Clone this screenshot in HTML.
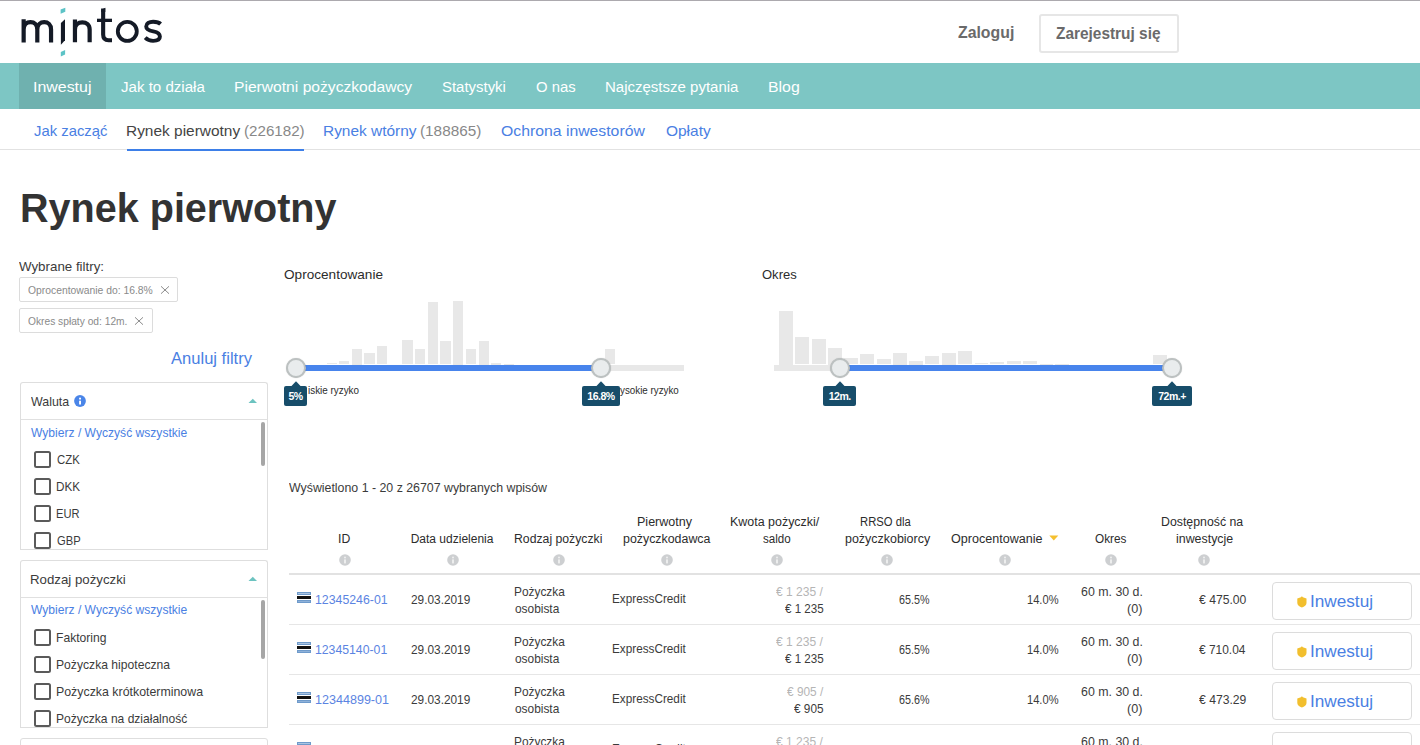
<!DOCTYPE html><html><head><meta charset="utf-8"><title>Rynek pierwotny</title><style>
html,body{margin:0;padding:0;background:#fff;}body{width:1420px;height:745px;overflow:hidden;position:relative;font-family:"Liberation Sans",sans-serif;}
.t{position:absolute;white-space:pre;line-height:1;transform-origin:0 0;}
</style></head><body>
<div style="position:absolute;left:0px;top:0px;width:1420px;height:1px;background:#aca9ae"></div>
<svg style="position:absolute;left:0;top:0" width="180" height="62" viewBox="0 0 180 62">
<g fill="none" stroke="#141a26" stroke-width="4.2">
<path d="M23.65,19.3 V42.5 M23.65,29.5 C23.65,24.6 26.7,22.2 30.5,22.2 C34.3,22.2 37.3,24.6 37.3,29.5 V42.5 M37.3,29.5 C37.3,24.6 40.4,22.2 44.2,22.2 C48,22.2 51.05,24.6 51.05,29.5 V42.5"/>
<path d="M74.95,19.4 V42.3 M74.95,29.5 C74.95,24.6 78.3,22.3 82.3,22.3 C86.3,22.3 89.65,24.6 89.65,29.5 V42.3"/>
<circle cx="127.3" cy="31.35" r="9.5" stroke-width="3.8"/>
<path d="M160.6,24 C158.8,22.2 156.2,21.8 153.1,21.8 C149.2,21.8 146.2,23.5 146.2,26.4 C146.2,29.7 149.6,30.6 153.3,31.3 C157.4,32.1 159.9,33.4 159.9,36.6 C159.9,39.4 157.3,40.9 153.1,40.9 C149.8,40.9 147.3,39.8 145.2,37.7" stroke-width="3.9"/>
<path d="M103.15,8.5 V34.5 C103.15,38.6 105.2,40.3 108.6,40.3 H112" stroke-width="4.1"/>
<path d="M97,20.35 H112" stroke-width="3.3"/>
</g>
<polygon fill="#141a26" points="60.9,23 65,19.3 65,40.3 60.9,44.7"/>
<polygon fill="#141a26" points="101.25,9.8 105.35,7.7 105.35,12 101.25,12"/>
<polygon fill="#5cc3c6" points="60.6,9.6 65.3,7.7 65.3,11.8 60.6,13.7"/>
<polygon fill="#5cc3c6" points="60.8,51.9 65.1,50 65.1,54.5 60.8,56.4"/>
</svg>
<div style="position:absolute;left:1038.5px;top:13.5px;width:136px;height:35px;border:2px solid #e6e6e6;border-radius:3px"></div>
<div style="position:absolute;left:0px;top:63px;width:1420px;height:46px;background:#7dc6c4"></div>
<div style="position:absolute;left:19px;top:63px;width:87px;height:46px;background:#6fb1af"></div>
<div style="position:absolute;left:0px;top:149px;width:1420px;height:1px;background:#e2e2e2"></div>
<div style="position:absolute;left:127px;top:149px;width:177px;height:2px;background:#3d7fe8"></div>
<div style="position:absolute;left:19px;top:277px;width:157px;height:23px;border:1px solid #dcdcdc;border-radius:2px"></div>
<div style="position:absolute;left:19px;top:308px;width:132px;height:23px;border:1px solid #dcdcdc;border-radius:2px"></div>
<svg style="position:absolute;left:160px;top:284.5px" width="10" height="10"><path d="M1,1.3 L9,8.7 M9,1.3 L1,8.7" stroke="#8c8c8c" stroke-width="1"/></svg>
<svg style="position:absolute;left:134px;top:315.5px" width="10" height="10"><path d="M1,1.3 L9,8.7 M9,1.3 L1,8.7" stroke="#8c8c8c" stroke-width="1"/></svg>
<div style="position:absolute;left:20px;top:382px;width:246px;height:36px;border:1px solid #dedede;border-radius:3px 3px 0 0;border-bottom:1px solid #e0e0e0"></div>
<div style="position:absolute;left:20px;top:420px;width:246px;height:129px;border:1px solid #dedede;border-top:0"></div>
<svg style="position:absolute;left:248px;top:397.5px" width="10" height="6"><path d="M0.5,5 L4.8,0.8 L9,5 Z" fill="#6cc3c0"/></svg>
<div style="position:absolute;left:261px;top:422px;width:4.3px;height:43.6px;background:#a6a6a6;border-radius:2px"></div>
<div style="position:absolute;left:20px;top:560px;width:246px;height:36px;border:1px solid #dedede;border-radius:3px 3px 0 0;border-bottom:1px solid #e0e0e0"></div>
<div style="position:absolute;left:20px;top:598px;width:246px;height:128.5px;border:1px solid #dedede;border-top:0"></div>
<svg style="position:absolute;left:248px;top:575.5px" width="10" height="6"><path d="M0.5,5 L4.8,0.8 L9,5 Z" fill="#6cc3c0"/></svg>
<div style="position:absolute;left:261px;top:599.7px;width:4.3px;height:59.7px;background:#a6a6a6;border-radius:2px"></div>
<div style="position:absolute;left:20px;top:738px;width:246px;height:20px;border:1px solid #dedede;border-radius:3px 3px 0 0"></div>
<svg style="position:absolute;left:73.9px;top:395.4px" width="12" height="12"><circle cx="6" cy="6" r="5.9" fill="#4a85e8"/><rect x="5.1" y="2.7" width="1.9" height="1.8" fill="#fff"/><rect x="5.1" y="5.7" width="1.9" height="3.8" fill="#fff"/></svg>
<div style="position:absolute;left:33.5px;top:450.6px;width:13.2px;height:13.2px;border:2px solid #5a5a5a;border-radius:2.5px"></div>
<div style="position:absolute;left:33.5px;top:477.6px;width:13.2px;height:13.2px;border:2px solid #5a5a5a;border-radius:2.5px"></div>
<div style="position:absolute;left:33.5px;top:504.6px;width:13.2px;height:13.2px;border:2px solid #5a5a5a;border-radius:2.5px"></div>
<div style="position:absolute;left:33.5px;top:531.6px;width:13.2px;height:13.2px;border:2px solid #5a5a5a;border-radius:2.5px"></div>
<div style="position:absolute;left:33.5px;top:628.5px;width:13.2px;height:13.2px;border:2px solid #5a5a5a;border-radius:2.5px"></div>
<div style="position:absolute;left:33.5px;top:655.5px;width:13.2px;height:13.2px;border:2px solid #5a5a5a;border-radius:2.5px"></div>
<div style="position:absolute;left:33.5px;top:682.5px;width:13.2px;height:13.2px;border:2px solid #5a5a5a;border-radius:2.5px"></div>
<div style="position:absolute;left:33.5px;top:709.5px;width:13.2px;height:13.2px;border:2px solid #5a5a5a;border-radius:2.5px"></div>
<div style="position:absolute;left:21px;top:550px;width:246px;height:10px;background:#fff"></div>
<div style="position:absolute;left:21px;top:727.5px;width:246px;height:10.5px;background:#fff"></div>
<div style="position:absolute;left:326.5px;top:362.8px;width:10.5px;height:1.7px;background:#e8e8e8"></div>
<div style="position:absolute;left:339px;top:360.9px;width:10.4px;height:3.6px;background:#e8e8e8"></div>
<div style="position:absolute;left:351.7px;top:349px;width:10.6px;height:15.5px;background:#e8e8e8"></div>
<div style="position:absolute;left:364.4px;top:352.8px;width:10.4px;height:11.7px;background:#e8e8e8"></div>
<div style="position:absolute;left:377px;top:345.9px;width:10.4px;height:18.6px;background:#e8e8e8"></div>
<div style="position:absolute;left:402.2px;top:339.9px;width:10.5px;height:24.6px;background:#e8e8e8"></div>
<div style="position:absolute;left:414.8px;top:348.8px;width:10.4px;height:15.7px;background:#e8e8e8"></div>
<div style="position:absolute;left:427.5px;top:301.8px;width:10.9px;height:62.7px;background:#e8e8e8"></div>
<div style="position:absolute;left:440.4px;top:340.9px;width:10.4px;height:23.6px;background:#e8e8e8"></div>
<div style="position:absolute;left:453px;top:301px;width:10.4px;height:63.5px;background:#e8e8e8"></div>
<div style="position:absolute;left:465.5px;top:349.2px;width:10.6px;height:15.3px;background:#e8e8e8"></div>
<div style="position:absolute;left:478.7px;top:341px;width:10.1px;height:23.5px;background:#e8e8e8"></div>
<div style="position:absolute;left:491px;top:363px;width:10.1px;height:1.5px;background:#e8e8e8"></div>
<div style="position:absolute;left:504px;top:363.6px;width:10px;height:0.9px;background:#e8e8e8"></div>
<div style="position:absolute;left:605px;top:349.2px;width:10.2px;height:15.3px;background:#e8e8e8"></div>
<div style="position:absolute;left:296px;top:365px;width:388px;height:5.7px;background:#e8e8e8"></div>
<div style="position:absolute;left:296px;top:365px;width:305px;height:5.7px;background:#4884ec"></div>
<div style="position:absolute;left:779.3px;top:311px;width:13.6px;height:53.5px;background:#e8e8e8"></div>
<div style="position:absolute;left:795.2px;top:336.8px;width:14.3px;height:27.7px;background:#e8e8e8"></div>
<div style="position:absolute;left:811.8px;top:339.2px;width:14.1px;height:25.3px;background:#e8e8e8"></div>
<div style="position:absolute;left:828.2px;top:348px;width:13.5px;height:16.5px;background:#e8e8e8"></div>
<div style="position:absolute;left:844px;top:357.7px;width:14px;height:6.8px;background:#e8e8e8"></div>
<div style="position:absolute;left:860.1px;top:353.9px;width:14.3px;height:10.6px;background:#e8e8e8"></div>
<div style="position:absolute;left:876.5px;top:358.8px;width:14.3px;height:5.7px;background:#e8e8e8"></div>
<div style="position:absolute;left:893.1px;top:353px;width:13.7px;height:11.5px;background:#e8e8e8"></div>
<div style="position:absolute;left:909.1px;top:361px;width:13.9px;height:3.5px;background:#e8e8e8"></div>
<div style="position:absolute;left:925px;top:355.9px;width:14.3px;height:8.6px;background:#e8e8e8"></div>
<div style="position:absolute;left:941.6px;top:353px;width:14.3px;height:11.5px;background:#e8e8e8"></div>
<div style="position:absolute;left:958.2px;top:350.8px;width:13.6px;height:13.7px;background:#e8e8e8"></div>
<div style="position:absolute;left:975px;top:362.8px;width:12.6px;height:1.7px;background:#e8e8e8"></div>
<div style="position:absolute;left:990.4px;top:361.9px;width:13.8px;height:2.6px;background:#e8e8e8"></div>
<div style="position:absolute;left:1006.9px;top:360.9px;width:13.9px;height:3.6px;background:#e8e8e8"></div>
<div style="position:absolute;left:1023.3px;top:360.9px;width:13.7px;height:3.6px;background:#e8e8e8"></div>
<div style="position:absolute;left:1039.5px;top:363.6px;width:13.2px;height:0.9px;background:#e8e8e8"></div>
<div style="position:absolute;left:1055px;top:363.8px;width:14px;height:0.7px;background:#e8e8e8"></div>
<div style="position:absolute;left:1153.2px;top:354.9px;width:13.8px;height:9.6px;background:#e8e8e8"></div>
<div style="position:absolute;left:774px;top:365px;width:398px;height:5.7px;background:#e8e8e8"></div>
<div style="position:absolute;left:840px;top:365px;width:332px;height:5.7px;background:#4884ec"></div>
<div style="position:absolute;left:285.8px;top:357.8px;width:16.4px;height:16.4px;border-radius:50%;background:#e9eced;border:2px solid #bcc1c1;box-shadow:0 0 1px rgba(0,0,0,.25)"></div>
<div style="position:absolute;left:590.8px;top:357.8px;width:16.4px;height:16.4px;border-radius:50%;background:#e9eced;border:2px solid #bcc1c1;box-shadow:0 0 1px rgba(0,0,0,.25)"></div>
<div style="position:absolute;left:829.8px;top:357.8px;width:16.4px;height:16.4px;border-radius:50%;background:#e9eced;border:2px solid #bcc1c1;box-shadow:0 0 1px rgba(0,0,0,.25)"></div>
<div style="position:absolute;left:1161.8px;top:357.8px;width:16.4px;height:16.4px;border-radius:50%;background:#e9eced;border:2px solid #bcc1c1;box-shadow:0 0 1px rgba(0,0,0,.25)"></div>
<svg style="position:absolute;left:291px;top:381px;z-index:5" width="10" height="6"><path d="M0,5.5 L5,0.3 L10,5.5 Z" fill="#174d6a"/></svg>
<div style="position:absolute;left:284px;top:386px;width:23px;height:20px;background:#174d6a;border-radius:2px;z-index:5;color:#fff;font-weight:700;font-size:10.5px;line-height:20px;text-align:center;letter-spacing:-0.5px">5%</div>
<svg style="position:absolute;left:596px;top:381px;z-index:5" width="10" height="6"><path d="M0,5.5 L5,0.3 L10,5.5 Z" fill="#174d6a"/></svg>
<div style="position:absolute;left:582px;top:386px;width:38px;height:20px;background:#174d6a;border-radius:2px;z-index:5;color:#fff;font-weight:700;font-size:10.5px;line-height:20px;text-align:center;letter-spacing:-0.5px">16.8%</div>
<svg style="position:absolute;left:835px;top:381px;z-index:5" width="10" height="6"><path d="M0,5.5 L5,0.3 L10,5.5 Z" fill="#174d6a"/></svg>
<div style="position:absolute;left:823.4px;top:386px;width:32.700000000000045px;height:20px;background:#174d6a;border-radius:2px;z-index:5;color:#fff;font-weight:700;font-size:10.5px;line-height:20px;text-align:center;letter-spacing:-0.5px">12m.</div>
<svg style="position:absolute;left:1167px;top:381px;z-index:5" width="10" height="6"><path d="M0,5.5 L5,0.3 L10,5.5 Z" fill="#174d6a"/></svg>
<div style="position:absolute;left:1152px;top:386px;width:40px;height:20px;background:#174d6a;border-radius:2px;z-index:5;color:#fff;font-weight:700;font-size:10.5px;line-height:20px;text-align:center;letter-spacing:-0.5px">72m.+</div>
<svg style="position:absolute;left:338.6px;top:553.5px" width="12" height="12"><circle cx="6" cy="6" r="5.8" fill="#cdcfd1"/><rect x="5.2" y="2.7" width="1.6" height="1.6" fill="#f4f4f4"/><rect x="5.2" y="5.4" width="1.6" height="4" fill="#f4f4f4"/></svg>
<svg style="position:absolute;left:446.5px;top:553.5px" width="12" height="12"><circle cx="6" cy="6" r="5.8" fill="#cdcfd1"/><rect x="5.2" y="2.7" width="1.6" height="1.6" fill="#f4f4f4"/><rect x="5.2" y="5.4" width="1.6" height="4" fill="#f4f4f4"/></svg>
<svg style="position:absolute;left:552.6px;top:553.5px" width="12" height="12"><circle cx="6" cy="6" r="5.8" fill="#cdcfd1"/><rect x="5.2" y="2.7" width="1.6" height="1.6" fill="#f4f4f4"/><rect x="5.2" y="5.4" width="1.6" height="4" fill="#f4f4f4"/></svg>
<svg style="position:absolute;left:660.6px;top:553.5px" width="12" height="12"><circle cx="6" cy="6" r="5.8" fill="#cdcfd1"/><rect x="5.2" y="2.7" width="1.6" height="1.6" fill="#f4f4f4"/><rect x="5.2" y="5.4" width="1.6" height="4" fill="#f4f4f4"/></svg>
<svg style="position:absolute;left:771.2px;top:553.5px" width="12" height="12"><circle cx="6" cy="6" r="5.8" fill="#cdcfd1"/><rect x="5.2" y="2.7" width="1.6" height="1.6" fill="#f4f4f4"/><rect x="5.2" y="5.4" width="1.6" height="4" fill="#f4f4f4"/></svg>
<svg style="position:absolute;left:881.2px;top:553.5px" width="12" height="12"><circle cx="6" cy="6" r="5.8" fill="#cdcfd1"/><rect x="5.2" y="2.7" width="1.6" height="1.6" fill="#f4f4f4"/><rect x="5.2" y="5.4" width="1.6" height="4" fill="#f4f4f4"/></svg>
<svg style="position:absolute;left:998.9px;top:553.5px" width="12" height="12"><circle cx="6" cy="6" r="5.8" fill="#cdcfd1"/><rect x="5.2" y="2.7" width="1.6" height="1.6" fill="#f4f4f4"/><rect x="5.2" y="5.4" width="1.6" height="4" fill="#f4f4f4"/></svg>
<svg style="position:absolute;left:1104.6px;top:553.5px" width="12" height="12"><circle cx="6" cy="6" r="5.8" fill="#cdcfd1"/><rect x="5.2" y="2.7" width="1.6" height="1.6" fill="#f4f4f4"/><rect x="5.2" y="5.4" width="1.6" height="4" fill="#f4f4f4"/></svg>
<svg style="position:absolute;left:1198.1px;top:553.5px" width="12" height="12"><circle cx="6" cy="6" r="5.8" fill="#cdcfd1"/><rect x="5.2" y="2.7" width="1.6" height="1.6" fill="#f4f4f4"/><rect x="5.2" y="5.4" width="1.6" height="4" fill="#f4f4f4"/></svg>
<svg style="position:absolute;left:1049px;top:535px" width="10" height="6"><path d="M0.3,0.4 L9.3,0.4 L4.8,5.6 Z" fill="#f5c02f"/></svg>
<div style="position:absolute;left:289px;top:573px;width:1131px;height:2px;background:#e2e2e2"></div>
<div style="position:absolute;left:289px;top:624px;width:1131px;height:1px;background:#e6e6e6"></div>
<svg style="position:absolute;left:297px;top:592px" width="14" height="11"><rect x="0" y="0" width="14" height="3" fill="#6e9acb"/><rect x="1" y="1" width="12" height="1" fill="#a9c4e2"/><rect x="0" y="3" width="14" height="1" fill="#fff"/><rect x="0" y="4" width="14" height="3" fill="#111"/><rect x="0" y="7" width="14" height="1" fill="#fff"/><rect x="0" y="8" width="14" height="3" fill="#6e9acb"/><rect x="1" y="9" width="12" height="1" fill="#8fb1d8"/></svg>
<div style="position:absolute;left:1272px;top:582px;width:138px;height:36px;border:1px solid #dcdcdc;border-radius:4px"></div>
<svg style="position:absolute;left:1296.5px;top:595.5px" width="11" height="12"><path d="M4.9,0.2 L5.9,1.2 L9.5,2.6 V6.9 C9.5,9.1 7.4,10.6 4.9,11.4 C2.4,10.6 0.3,9.1 0.3,6.9 V2.6 L3.9,1.2 Z" fill="#f2bf2e"/></svg>
<div style="position:absolute;left:289px;top:674px;width:1131px;height:1px;background:#e6e6e6"></div>
<svg style="position:absolute;left:297px;top:642px" width="14" height="11"><rect x="0" y="0" width="14" height="3" fill="#6e9acb"/><rect x="1" y="1" width="12" height="1" fill="#a9c4e2"/><rect x="0" y="3" width="14" height="1" fill="#fff"/><rect x="0" y="4" width="14" height="3" fill="#111"/><rect x="0" y="7" width="14" height="1" fill="#fff"/><rect x="0" y="8" width="14" height="3" fill="#6e9acb"/><rect x="1" y="9" width="12" height="1" fill="#8fb1d8"/></svg>
<div style="position:absolute;left:1272px;top:632px;width:138px;height:36px;border:1px solid #dcdcdc;border-radius:4px"></div>
<svg style="position:absolute;left:1296.5px;top:645.5px" width="11" height="12"><path d="M4.9,0.2 L5.9,1.2 L9.5,2.6 V6.9 C9.5,9.1 7.4,10.6 4.9,11.4 C2.4,10.6 0.3,9.1 0.3,6.9 V2.6 L3.9,1.2 Z" fill="#f2bf2e"/></svg>
<div style="position:absolute;left:289px;top:724px;width:1131px;height:1px;background:#e6e6e6"></div>
<svg style="position:absolute;left:297px;top:692px" width="14" height="11"><rect x="0" y="0" width="14" height="3" fill="#6e9acb"/><rect x="1" y="1" width="12" height="1" fill="#a9c4e2"/><rect x="0" y="3" width="14" height="1" fill="#fff"/><rect x="0" y="4" width="14" height="3" fill="#111"/><rect x="0" y="7" width="14" height="1" fill="#fff"/><rect x="0" y="8" width="14" height="3" fill="#6e9acb"/><rect x="1" y="9" width="12" height="1" fill="#8fb1d8"/></svg>
<div style="position:absolute;left:1272px;top:682px;width:138px;height:36px;border:1px solid #dcdcdc;border-radius:4px"></div>
<svg style="position:absolute;left:1296.5px;top:695.5px" width="11" height="12"><path d="M4.9,0.2 L5.9,1.2 L9.5,2.6 V6.9 C9.5,9.1 7.4,10.6 4.9,11.4 C2.4,10.6 0.3,9.1 0.3,6.9 V2.6 L3.9,1.2 Z" fill="#f2bf2e"/></svg>
<svg style="position:absolute;left:297px;top:742px" width="14" height="11"><rect x="0" y="0" width="14" height="3" fill="#6e9acb"/><rect x="1" y="1" width="12" height="1" fill="#a9c4e2"/><rect x="0" y="3" width="14" height="1" fill="#fff"/><rect x="0" y="4" width="14" height="3" fill="#111"/><rect x="0" y="7" width="14" height="1" fill="#fff"/><rect x="0" y="8" width="14" height="3" fill="#6e9acb"/><rect x="1" y="9" width="12" height="1" fill="#8fb1d8"/></svg>
<div style="position:absolute;left:1272px;top:732px;width:138px;height:36px;border:1px solid #dcdcdc;border-radius:4px"></div>
<svg style="position:absolute;left:1296.5px;top:745.5px" width="11" height="12"><path d="M4.9,0.2 L5.9,1.2 L9.5,2.6 V6.9 C9.5,9.1 7.4,10.6 4.9,11.4 C2.4,10.6 0.3,9.1 0.3,6.9 V2.6 L3.9,1.2 Z" fill="#f2bf2e"/></svg>
<div class="t" style="left:957.60px;top:25.40px;font-size:16px;color:#6a6a6a;font-weight:700;transform:scaleX(0.9893);">Zaloguj</div>
<div class="t" style="left:1056.00px;top:25.80px;font-size:16px;color:#6a6a6a;font-weight:700;transform:scaleX(0.9630);">Zarejestruj się</div>
<div class="t" style="left:32.87px;top:79.00px;font-size:15.5px;color:#ffffff;transform:scaleX(1.0273);">Inwestuj</div>
<div class="t" style="left:120.70px;top:79.00px;font-size:15.5px;color:#ffffff;transform:scaleX(0.9733);">Jak to działa</div>
<div class="t" style="left:233.79px;top:79.00px;font-size:15.5px;color:#ffffff;transform:scaleX(1.0085);">Pierwotni pożyczkodawcy</div>
<div class="t" style="left:442.34px;top:79.00px;font-size:15.5px;color:#ffffff;transform:scaleX(0.9631);">Statystyki</div>
<div class="t" style="left:536.30px;top:79.00px;font-size:15.5px;color:#ffffff;transform:scaleX(0.9585);">O nas</div>
<div class="t" style="left:604.73px;top:79.00px;font-size:15.5px;color:#ffffff;transform:scaleX(0.9679);">Najczęstsze pytania</div>
<div class="t" style="left:767.68px;top:79.00px;font-size:15.5px;color:#ffffff;transform:scaleX(1.0233);">Blog</div>
<div class="t" style="left:33.50px;top:122.50px;font-size:15px;color:#4a80e3;transform:scaleX(0.9892);">Jak zacząć</div>
<div class="t" style="left:125.97px;top:122.50px;font-size:15px;color:#444;transform:scaleX(1.0291);">Rynek pierwotny</div>
<div class="t" style="left:243.99px;top:122.50px;font-size:15px;color:#888;transform:scaleX(1.0103);">(226182)</div>
<div class="t" style="left:323.37px;top:122.50px;font-size:15px;color:#4a80e3;transform:scaleX(1.0289);">Rynek wtórny</div>
<div class="t" style="left:420.48px;top:122.50px;font-size:15px;color:#888;transform:scaleX(1.0207);">(188865)</div>
<div class="t" style="left:500.90px;top:122.50px;font-size:15px;color:#4a80e3;transform:scaleX(1.0518);">Ochrona inwestorów</div>
<div class="t" style="left:665.70px;top:122.50px;font-size:15px;color:#4a80e3;transform:scaleX(1.0302);">Opłaty</div>
<div class="t" style="left:19.55px;top:188.00px;font-size:40.5px;color:#333;font-weight:700;transform:scaleX(0.9767);">Rynek pierwotny</div>
<div class="t" style="left:18.80px;top:261.00px;font-size:12.2px;color:#3b3b3b;transform:scaleX(1.0935);">Wybrane filtry:</div>
<div class="t" style="left:27.80px;top:285.00px;font-size:10.8px;color:#8a8a8a;transform:scaleX(0.9577);">Oprocentowanie do: 16.8%</div>
<div class="t" style="left:27.80px;top:316.00px;font-size:10.8px;color:#8a8a8a;transform:scaleX(0.9471);">Okres spłaty od: 12m.</div>
<div class="t" style="left:171.00px;top:350.50px;font-size:16px;color:#4a80e3;transform:scaleX(1.0346);">Anuluj filtry</div>
<div class="t" style="left:31.30px;top:395.40px;font-size:13.5px;color:#3b3b3b;transform:scaleX(0.9190);">Waluta</div>
<div class="t" style="left:31.30px;top:425.60px;font-size:13px;color:#4a80e3;transform:scaleX(0.9298);">Wybierz / Wyczyść wszystkie</div>
<div class="t" style="left:56.60px;top:453.60px;font-size:12.8px;color:#3b3b3b;transform:scaleX(0.8880);">CZK</div>
<div class="t" style="left:55.68px;top:480.60px;font-size:12.8px;color:#3b3b3b;transform:scaleX(0.9160);">DKK</div>
<div class="t" style="left:55.73px;top:507.60px;font-size:12.8px;color:#3b3b3b;transform:scaleX(0.8692);">EUR</div>
<div class="t" style="left:56.60px;top:534.60px;font-size:12.8px;color:#3b3b3b;transform:scaleX(0.8741);">GBP</div>
<div class="t" style="left:29.92px;top:573.00px;font-size:13.5px;color:#3b3b3b;transform:scaleX(0.9812);">Rodzaj pożyczki</div>
<div class="t" style="left:30.90px;top:603.00px;font-size:13px;color:#4a80e3;transform:scaleX(0.9298);">Wybierz / Wyczyść wszystkie</div>
<div class="t" style="left:56.15px;top:631.50px;font-size:12.8px;color:#3b3b3b;transform:scaleX(0.9462);">Faktoring</div>
<div class="t" style="left:56.15px;top:658.50px;font-size:12.8px;color:#3b3b3b;transform:scaleX(0.9487);">Pożyczka hipoteczna</div>
<div class="t" style="left:56.13px;top:685.50px;font-size:12.8px;color:#3b3b3b;transform:scaleX(0.9662);">Pożyczka krótkoterminowa</div>
<div class="t" style="left:56.16px;top:712.50px;font-size:12.8px;color:#3b3b3b;transform:scaleX(0.9413);">Pożyczka na działalność</div>
<div class="t" style="left:283.90px;top:268.80px;font-size:12.6px;color:#2c2c2c;transform:scaleX(1.0793);">Oprocentowanie</div>
<div class="t" style="left:761.60px;top:268.80px;font-size:12.6px;color:#2c2c2c;transform:scaleX(1.0333);">Okres</div>
<div class="t" style="left:307.50px;top:385.00px;font-size:10.8px;color:#2c2c2c;transform:scaleX(0.9143);">iskie ryzyko</div>
<div class="t" style="left:620.00px;top:384.60px;font-size:10.8px;color:#2c2c2c;transform:scaleX(0.9077);">ysokie ryzyko</div>
<div class="t" style="left:289.30px;top:481.80px;font-size:12px;color:#3b3b3b;transform:scaleX(1.0291);">Wyświetlono 1 - 20 z 26707 wybranych wpisów</div>
<div class="t" style="left:337.78px;top:532.80px;font-size:12px;color:#2c2c2c;transform:scaleX(1.0182);">ID</div>
<div class="t" style="left:410.70px;top:532.80px;font-size:12px;color:#2c2c2c;">Data udzielenia</div>
<div class="t" style="left:514.38px;top:532.80px;font-size:12px;color:#2c2c2c;transform:scaleX(1.0200);">Rodzaj pożyczki</div>
<div class="t" style="left:636.96px;top:516.10px;font-size:12px;color:#2c2c2c;transform:scaleX(1.0442);">Pierwotny</div>
<div class="t" style="left:622.70px;top:532.80px;font-size:12px;color:#2c2c2c;transform:scaleX(1.0318);">pożyczkodawca</div>
<div class="t" style="left:730.36px;top:516.10px;font-size:12px;color:#2c2c2c;transform:scaleX(1.0376);">Kwota pożyczki/</div>
<div class="t" style="left:763.00px;top:532.80px;font-size:12px;color:#2c2c2c;transform:scaleX(0.9655);">saldo</div>
<div class="t" style="left:859.66px;top:516.10px;font-size:12px;color:#2c2c2c;transform:scaleX(0.9377);">RRSO dla</div>
<div class="t" style="left:844.60px;top:532.80px;font-size:12px;color:#2c2c2c;transform:scaleX(1.0378);">pożyczkobiorcy</div>
<div class="t" style="left:951.30px;top:532.80px;font-size:12px;color:#2c2c2c;transform:scaleX(1.0483);">Oprocentowanie</div>
<div class="t" style="left:1095.00px;top:532.80px;font-size:12px;color:#2c2c2c;transform:scaleX(0.9813);">Okres</div>
<div class="t" style="left:1160.97px;top:516.10px;font-size:12px;color:#2c2c2c;transform:scaleX(1.0266);">Dostępność na</div>
<div class="t" style="left:1175.50px;top:532.80px;font-size:12px;color:#2c2c2c;transform:scaleX(1.0327);">inwestycje</div>
<div class="t" style="left:315.45px;top:592.90px;font-size:13px;color:#5b84e2;transform:scaleX(0.9474);">12345246-01</div>
<div class="t" style="left:410.80px;top:592.90px;font-size:13px;color:#3b3b3b;transform:scaleX(0.9108);">29.03.2019</div>
<div class="t" style="left:513.99px;top:585.20px;font-size:13px;color:#3b3b3b;transform:scaleX(0.9145);">Pożyczka</div>
<div class="t" style="left:514.90px;top:601.70px;font-size:13px;color:#3b3b3b;transform:scaleX(0.9143);">osobista</div>
<div class="t" style="left:612.10px;top:592.30px;font-size:13px;color:#3b3b3b;transform:scaleX(0.9037);">ExpressCredit</div>
<div class="t" style="left:776.30px;top:585.20px;font-size:13px;color:#b5b5b5;transform:scaleX(0.9255);">€ 1 235 /</div>
<div class="t" style="left:784.60px;top:601.70px;font-size:13px;color:#3b3b3b;transform:scaleX(0.8930);">€ 1 235</div>
<div class="t" style="left:899.10px;top:592.90px;font-size:13px;color:#3b3b3b;transform:scaleX(0.8270);">65.5%</div>
<div class="t" style="left:1027.14px;top:592.90px;font-size:13px;color:#3b3b3b;transform:scaleX(0.8556);">14.0%</div>
<div class="t" style="left:1080.60px;top:585.40px;font-size:13px;color:#3b3b3b;transform:scaleX(0.9516);">60 m. 30 d.</div>
<div class="t" style="left:1126.93px;top:602.20px;font-size:13px;color:#3b3b3b;transform:scaleX(0.9714);">(0)</div>
<div class="t" style="left:1199.40px;top:593.10px;font-size:13px;color:#3b3b3b;transform:scaleX(0.9360);">€ 475.00</div>
<div class="t" style="left:1309.96px;top:593.00px;font-size:16.5px;color:#4a80e3;transform:scaleX(1.0407);">Inwestuj</div>
<div class="t" style="left:315.46px;top:642.90px;font-size:13px;color:#5b84e2;transform:scaleX(0.9421);">12345140-01</div>
<div class="t" style="left:410.80px;top:642.90px;font-size:13px;color:#3b3b3b;transform:scaleX(0.9108);">29.03.2019</div>
<div class="t" style="left:513.99px;top:635.20px;font-size:13px;color:#3b3b3b;transform:scaleX(0.9145);">Pożyczka</div>
<div class="t" style="left:514.90px;top:651.70px;font-size:13px;color:#3b3b3b;transform:scaleX(0.9143);">osobista</div>
<div class="t" style="left:612.10px;top:642.30px;font-size:13px;color:#3b3b3b;transform:scaleX(0.9037);">ExpressCredit</div>
<div class="t" style="left:776.30px;top:635.20px;font-size:13px;color:#b5b5b5;transform:scaleX(0.9255);">€ 1 235 /</div>
<div class="t" style="left:784.60px;top:651.70px;font-size:13px;color:#3b3b3b;transform:scaleX(0.8930);">€ 1 235</div>
<div class="t" style="left:899.10px;top:642.90px;font-size:13px;color:#3b3b3b;transform:scaleX(0.8270);">65.5%</div>
<div class="t" style="left:1027.14px;top:642.90px;font-size:13px;color:#3b3b3b;transform:scaleX(0.8556);">14.0%</div>
<div class="t" style="left:1080.60px;top:635.40px;font-size:13px;color:#3b3b3b;transform:scaleX(0.9516);">60 m. 30 d.</div>
<div class="t" style="left:1126.93px;top:652.20px;font-size:13px;color:#3b3b3b;transform:scaleX(0.9714);">(0)</div>
<div class="t" style="left:1199.40px;top:643.10px;font-size:13px;color:#3b3b3b;transform:scaleX(0.9176);">€ 710.04</div>
<div class="t" style="left:1309.96px;top:643.00px;font-size:16.5px;color:#4a80e3;transform:scaleX(1.0407);">Inwestuj</div>
<div class="t" style="left:315.43px;top:692.90px;font-size:13px;color:#5b84e2;transform:scaleX(0.9658);">12344899-01</div>
<div class="t" style="left:410.80px;top:692.90px;font-size:13px;color:#3b3b3b;transform:scaleX(0.9108);">29.03.2019</div>
<div class="t" style="left:513.99px;top:685.20px;font-size:13px;color:#3b3b3b;transform:scaleX(0.9145);">Pożyczka</div>
<div class="t" style="left:514.90px;top:701.70px;font-size:13px;color:#3b3b3b;transform:scaleX(0.9143);">osobista</div>
<div class="t" style="left:612.10px;top:692.30px;font-size:13px;color:#3b3b3b;transform:scaleX(0.9037);">ExpressCredit</div>
<div class="t" style="left:787.00px;top:685.20px;font-size:13px;color:#b5b5b5;transform:scaleX(0.9125);">€ 905 /</div>
<div class="t" style="left:794.00px;top:701.70px;font-size:13px;color:#3b3b3b;transform:scaleX(0.9062);">€ 905</div>
<div class="t" style="left:899.10px;top:692.90px;font-size:13px;color:#3b3b3b;transform:scaleX(0.8270);">65.6%</div>
<div class="t" style="left:1027.14px;top:692.90px;font-size:13px;color:#3b3b3b;transform:scaleX(0.8556);">14.0%</div>
<div class="t" style="left:1080.60px;top:685.40px;font-size:13px;color:#3b3b3b;transform:scaleX(0.9516);">60 m. 30 d.</div>
<div class="t" style="left:1126.93px;top:702.20px;font-size:13px;color:#3b3b3b;transform:scaleX(0.9714);">(0)</div>
<div class="t" style="left:1199.40px;top:693.10px;font-size:13px;color:#3b3b3b;transform:scaleX(0.9360);">€ 473.29</div>
<div class="t" style="left:1309.96px;top:693.00px;font-size:16.5px;color:#4a80e3;transform:scaleX(1.0407);">Inwestuj</div>
<div class="t" style="left:315.45px;top:742.90px;font-size:13px;color:#5b84e2;transform:scaleX(0.9474);">12344777-01</div>
<div class="t" style="left:410.80px;top:742.90px;font-size:13px;color:#3b3b3b;transform:scaleX(0.9108);">29.03.2019</div>
<div class="t" style="left:513.99px;top:735.20px;font-size:13px;color:#3b3b3b;transform:scaleX(0.9145);">Pożyczka</div>
<div class="t" style="left:514.90px;top:751.70px;font-size:13px;color:#3b3b3b;transform:scaleX(0.9143);">osobista</div>
<div class="t" style="left:612.10px;top:742.30px;font-size:13px;color:#3b3b3b;transform:scaleX(0.9037);">ExpressCredit</div>
<div class="t" style="left:776.30px;top:735.20px;font-size:13px;color:#b5b5b5;transform:scaleX(0.9255);">€ 1 235 /</div>
<div class="t" style="left:784.60px;top:751.70px;font-size:13px;color:#3b3b3b;transform:scaleX(0.8930);">€ 1 235</div>
<div class="t" style="left:899.10px;top:742.90px;font-size:13px;color:#3b3b3b;transform:scaleX(0.8270);">65.5%</div>
<div class="t" style="left:1027.14px;top:742.90px;font-size:13px;color:#3b3b3b;transform:scaleX(0.8556);">14.0%</div>
<div class="t" style="left:1080.60px;top:735.40px;font-size:13px;color:#3b3b3b;transform:scaleX(0.9516);">60 m. 30 d.</div>
<div class="t" style="left:1126.93px;top:752.20px;font-size:13px;color:#3b3b3b;transform:scaleX(0.9714);">(0)</div>
<div class="t" style="left:1199.40px;top:743.10px;font-size:13px;color:#3b3b3b;transform:scaleX(0.9360);">€ 475.00</div>
<div class="t" style="left:1309.96px;top:743.00px;font-size:16.5px;color:#4a80e3;transform:scaleX(1.0407);">Inwestuj</div>
</body></html>
